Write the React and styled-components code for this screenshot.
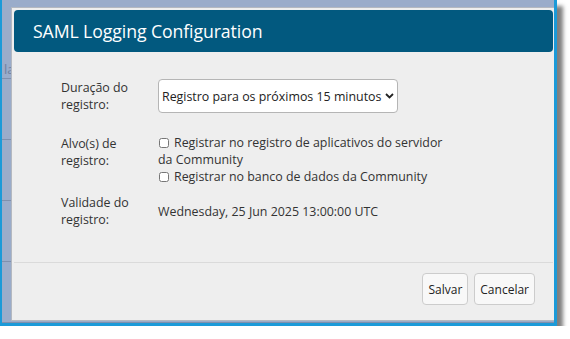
import React from "react";
import styled, { createGlobalStyle } from "styled-components";

const GlobalStyle = createGlobalStyle`
  html, body {
    margin: 0;
    padding: 0;
    background: #ffffff;
  }
  body {
    font-family: "Open Sans", "Noto Sans", sans-serif;
  }
`;

const Frame = styled.div`
  position: relative;
  width: 552px;
  height: 323px;
  border-left: 2px solid #1b9ad8;
  border-right: 3px solid #1b9ad8;
  border-bottom: 3px solid #1b9ad8;
  box-shadow: 6px 6px 4px rgba(0, 0, 0, 0.5);
  overflow: hidden;
  background: #9aacca;
`;

const PageBehind = styled.div`
  display: flex;
  flex-direction: column;
  height: 100%;
`;

const TopStrip = styled.div`
  height: 2px;
  background: #b3c1d8;
`;

const BehindRow = styled.div`
  height: ${(p) => p.$h}px;
  border-bottom: 1px solid #7f90ad;
  box-sizing: border-box;
  padding: 60px 0 0 2px;
  font-size: 13px;
  color: #6f80a0;
`;

const Modal = styled.div`
  position: absolute;
  left: 9px;
  top: 7px;
  width: 545px;
  height: 314px;
  box-sizing: border-box;
  padding: 2px;
  background: #eeeeee;
  border: 1px solid #b4b8c0;
  display: flex;
  flex-direction: column;
`;

const Header = styled.div`
  height: 42px;
  display: flex;
  align-items: center;
  padding-left: 19px;
  background: #02597f;
  border-radius: 4px;
  color: #ffffff;
  font-size: 17.7px;
  letter-spacing: -0.1px;
`;

const Body = styled.div`
  display: flex;
  flex-direction: column;
  padding: 27px 0 34px 47px;
  border-bottom: 1px solid #dadada;
  color: #333333;
  font-size: 12.4px;
  line-height: 17px;
`;

const Row = styled.div`
  display: grid;
  grid-template-columns: 97px 1fr;
  margin-top: ${(p) => p.$mt || 0}px;
  align-items: ${(p) => (p.$center ? "center" : "start")};
`;

const Label = styled.div`
  padding-top: ${(p) => p.$pt || 0}px;
  width: 80px;
`;

const SelectWrap = styled.div`
  position: relative;
  width: 240px;
`;

const Select = styled.select`
  appearance: none;
  width: 240px;
  height: 34px;
  padding: 0 0 0 3px;
  border: 1px solid #b5b5b5;
  border-radius: 4px;
  background: #ffffff;
  font-family: "Open Sans", "Noto Sans", sans-serif;
  font-size: 12.4px;
  color: #222222;
`;

const Chevron = styled.svg`
  position: absolute;
  right: 4px;
  top: 14px;
  pointer-events: none;
`;

const Checks = styled.div`
  display: flex;
  flex-direction: column;
  width: 292px;
`;

const CheckLine = styled.label`
  display: block;
`;

const Box = styled.input`
  width: 10px;
  height: 10px;
  margin: 0 5px 0 1px;
  vertical-align: -1px;
`;

const Footer = styled.div`
  flex: 1;
  display: flex;
  justify-content: flex-end;
  align-items: flex-start;
  gap: 6px;
  padding: 10px 18px 0 0;
`;

const Button = styled.button`
  height: 32px;
  padding: 0 ${(p) => p.$px}px;
  background: #f8f8f8;
  border: 1px solid #cccccc;
  border-radius: 4px;
  font-family: "Open Sans", "Noto Sans", sans-serif;
  font-size: 12px;
  color: #222222;
`;

const behindRows = [107, 34, 53, 34, 47, 60];

export default function App() {
  return (
    <>
      <GlobalStyle />
      <Frame>
        <PageBehind>
          <TopStrip />
          {behindRows.map((h, i) => (
            <BehindRow key={i} $h={h}>
              {i === 0 ? "la" : ""}
            </BehindRow>
          ))}
        </PageBehind>
        <Modal>
          <Header>SAML Logging Configuration</Header>
          <Body>
            <Row>
              <Label>Duração do registro:</Label>
              <SelectWrap>
                <Select defaultValue="15">
                  <option value="15">Registro para os próximos 15 minutos</option>
                  <option value="30">Registro para os próximos 30 minutos</option>
                </Select>
                <Chevron width="9" height="6" viewBox="0 0 9 6">
                  <path d="M1 1 L4.5 4.5 L8 1" fill="none" stroke="#222" strokeWidth="1.8" />
                </Chevron>
              </SelectWrap>
            </Row>
            <Row $mt={21}>
              <Label $pt={1}>Alvo(s) de registro:</Label>
              <Checks>
                <CheckLine>
                  <Box type="checkbox" />
                  Registrar no registro de aplicativos do servidor da Community
                </CheckLine>
                <CheckLine>
                  <Box type="checkbox" />
                  Registrar no banco de dados da Community
                </CheckLine>
              </Checks>
            </Row>
            <Row $mt={9} $center>
              <Label>Validade do registro:</Label>
              <div>Wednesday, 25 Jun 2025 13:00:00 UTC</div>
            </Row>
          </Body>
          <Footer>
            <Button $px={5}>Salvar</Button>
            <Button $px={5}>Cancelar</Button>
          </Footer>
        </Modal>
      </Frame>
    </>
  );
}
